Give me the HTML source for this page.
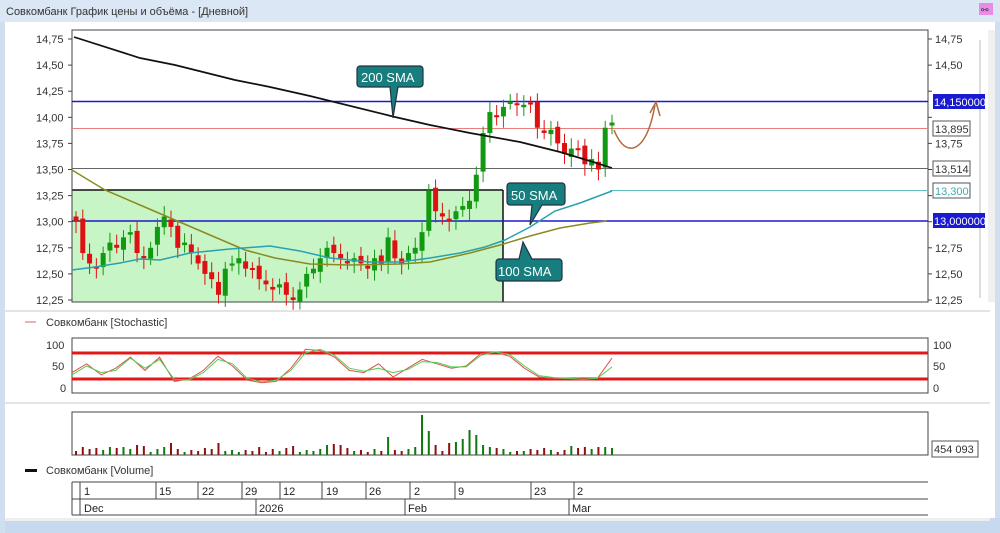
<!DOCTYPE html>
<html><head><meta charset="utf-8"><style>
html,body{margin:0;padding:0;width:1000px;height:533px;overflow:hidden;background:#cfdff0;font-family:"Liberation Sans","DejaVu Sans",sans-serif}
svg{position:absolute;left:0;top:0}
</style></head><body>
<svg id="s" width="1000" height="533" viewBox="0 0 1000 533" font-family="Liberation Sans, DejaVu Sans, sans-serif">
<rect x="0" y="0" width="1000" height="22" fill="#dbe7f4"/>
<text x="6" y="15" font-size="11" fill="#333">Совкомбанк График цены и объёма - [Дневной]</text>
<rect x="979" y="3" width="14" height="12" fill="#e98ce6"/>
<text x="981" y="13" font-size="9" fill="#333">⚯</text>
<rect x="5" y="22" width="990" height="498" fill="#fff"/>
<rect x="5" y="310" width="985" height="2" fill="#e4e4e4"/>
<rect x="5" y="402" width="985" height="2" fill="#e4e4e4"/>
<rect x="5" y="518" width="995" height="15" fill="#c7d9ee"/>
<rect x="5" y="518" width="985" height="3" fill="#eeeeee"/>
<rect x="988" y="30" width="7" height="272" fill="#f0f0f0"/>
<rect x="979" y="40" width="2" height="258" fill="#ddd"/>
<!-- main chart -->
<rect x="72" y="190" width="431" height="112" fill="#c8f5c5"/>
<line x1="72" y1="190" x2="503" y2="190" stroke="#111" stroke-width="1.5"/>
<line x1="503" y1="190" x2="503" y2="302" stroke="#111" stroke-width="1.5"/>
<rect x="72" y="30" width="856" height="272" fill="none" stroke="#444" stroke-width="1"/>
<line x1="72" y1="101.5" x2="928" y2="101.5" stroke="#1a1ad0" stroke-width="1.5"/>
<line x1="72" y1="221" x2="928" y2="221" stroke="#1a1ad0" stroke-width="1.5"/>
<line x1="72" y1="128.5" x2="928" y2="128.5" stroke="#e88080" stroke-width="1"/>
<line x1="72" y1="168.5" x2="928" y2="168.5" stroke="#666" stroke-width="1"/>
<line x1="610" y1="190.5" x2="928" y2="190.5" stroke="#60c0c0" stroke-width="1"/>
<g id="candles"></g>
<path d="M74,37 L140,58 L175,65 L235,80 L270,87 L310,96 L395,117 L430,125 L470,133 L520,142 L560,152 L590,161 L612,168" fill="none" stroke="#111" stroke-width="1.7"/>
<path d="M72,170 L105,190 L140,205 L175,220 L210,235 L245,250 L275,258 L310,264 L350,265 L400,264 L430,262 L470,253 L500,245 L530,236 L560,228 L590,223 L607,221" fill="none" stroke="#8a8a20" stroke-width="1.5"/>
<path d="M72,270 L95,267 L120,263 L140,259 L160,260 L190,253 L230,249 L270,246 L300,251 L330,258 L370,262 L400,262 L430,258 L460,253 L485,247 L505,240 L530,227 L555,211 L580,203 L612,191" fill="none" stroke="#2aa0b0" stroke-width="1.5"/>
<path d="M614,130 Q622,150 633,148 Q648,144 655,105 M650,113 L656,102 L660,116" fill="none" stroke="#b06a40" stroke-width="1.5"/>
<!-- labels -->
<g fill="#177d7d" stroke="#234" stroke-width="1.2">
<path d="M360,66 h60 a3,3 0 0 1 3,3 v15 a3,3 0 0 1 -3,3 h-22 l-5,31 l-3,-31 h-30 a3,3 0 0 1 -3,-3 v-15 a3,3 0 0 1 3,-3z"/>
<path d="M510,183 h52 a3,3 0 0 1 3,3 v16 a3,3 0 0 1 -3,3 h-20 l-12,20 l2,-20 h-22 a3,3 0 0 1 -3,-3 v-16 a3,3 0 0 1 3,-3z"/>
<path d="M499,259 h20 l4,-17 l9,17 h27 a3,3 0 0 1 3,3 v16 a3,3 0 0 1 -3,3 h-60 a3,3 0 0 1 -3,-3 v-16 a3,3 0 0 1 3,-3z"/>
</g>
<g fill="#fff" font-size="13"><text x="361" y="82">200 SMA</text><text x="511" y="200">50 SMA</text><text x="498" y="276">100 SMA</text></g>
<!-- axes -->
<g id="ax" font-size="11" fill="#333"></g>
<rect x="933" y="94" width="52" height="15" fill="#1a1ad0"/><text x="934" y="106" font-size="11" fill="#fff">14,150000</text>
<rect x="933" y="121" width="37" height="15" fill="#fff" stroke="#555"/><text x="935" y="133" font-size="11" fill="#333">13,895</text>
<rect x="933" y="161" width="37" height="15" fill="#fff" stroke="#555"/><text x="935" y="173" font-size="11" fill="#333">13,514</text>
<rect x="933" y="183" width="37" height="15" fill="#fff" stroke="#555"/><text x="935" y="195" font-size="11" fill="#4aa">13,300</text>
<rect x="933" y="213" width="52" height="15" fill="#1a1ad0"/><text x="934" y="225" font-size="11" fill="#fff">13,000000</text>
<!-- stochastic -->
<line x1="25" y1="322" x2="36" y2="322" stroke="#e06060"/>
<text x="46" y="326" font-size="11" fill="#333">Совкомбанк [Stochastic]</text>
<rect x="72" y="338" width="856" height="55" fill="none" stroke="#444"/>
<rect x="72" y="351.5" width="856" height="3" fill="#e01818"/>
<rect x="72" y="377.5" width="856" height="3" fill="#e01818"/>
<polyline id="st1" fill="none" stroke="#e05050" stroke-width="1"/>
<polyline id="st2" fill="none" stroke="#50d050" stroke-width="1"/>
<g font-size="11" fill="#333"><text x="46" y="349">100</text><text x="52" y="370">50</text><text x="60" y="392">0</text>
<text x="933" y="349">100</text><text x="933" y="370">50</text><text x="933" y="392">0</text></g>
<!-- volume -->
<rect x="72" y="412" width="856" height="43" fill="none" stroke="#444"/>
<g id="vol"></g>
<rect x="932" y="441" width="46" height="16" fill="#fff" stroke="#555"/><text x="934" y="453" font-size="11" fill="#333">454 093</text>
<rect x="25" y="469" width="12" height="3" fill="#111"/>
<text x="46" y="474" font-size="11" fill="#333">Совкомбанк [Volume]</text>
<!-- date axis -->
<g stroke="#444" fill="none"><line x1="72" y1="482" x2="928" y2="482"/><line x1="72" y1="499" x2="928" y2="499"/><line x1="72" y1="515" x2="928" y2="515"/><line x1="72" y1="482" x2="72" y2="515"/><line x1="80" y1="482" x2="80" y2="515"/>
<line x1="156" y1="482" x2="156" y2="499"/><line x1="198" y1="482" x2="198" y2="499"/><line x1="242" y1="482" x2="242" y2="499"/><line x1="280" y1="482" x2="280" y2="499"/><line x1="322" y1="482" x2="322" y2="499"/><line x1="366" y1="482" x2="366" y2="499"/><line x1="410" y1="482" x2="410" y2="499"/><line x1="455" y1="482" x2="455" y2="499"/><line x1="531" y1="482" x2="531" y2="499"/><line x1="574" y1="482" x2="574" y2="499"/>
<line x1="256" y1="499" x2="256" y2="515"/><line x1="405" y1="499" x2="405" y2="515"/><line x1="569" y1="499" x2="569" y2="515"/></g>
<g font-size="11" fill="#222"><text x="84" y="495">1</text><text x="159" y="495">15</text><text x="202" y="495">22</text><text x="245" y="495">29</text><text x="283" y="495">12</text><text x="326" y="495">19</text><text x="369" y="495">26</text><text x="414" y="495">2</text><text x="458" y="495">9</text><text x="534" y="495">23</text><text x="577" y="495">2</text>
<text x="84" y="512">Dec</text><text x="259" y="512">2026</text><text x="408" y="512">Feb</text><text x="572" y="512">Mar</text></g>
</svg>
<script>
var ns="http://www.w3.org/2000/svg";
function el(p,t,a){var e=document.createElementNS(ns,t);for(var k in a)e.setAttribute(k,a[k]);p.appendChild(e);return e;}
function Y(p){return 39+(14.75-p)*104.4;}
var ax=document.getElementById('ax');
var labs=["14,75","14,50","14,25","14,00","13,75","13,50","13,25","13,00","12,75","12,50","12,25"];
for(var i=0;i<11;i++){var y=Y(14.75-i*0.25);
el(ax,'text',{x:36,y:y+4}).textContent=labs[i];el(ax,'line',{x1:68,y1:y,x2:72,y2:y,stroke:'#444'});
if(i!=2&&i!=3&&i!=6&&i!=7)el(ax,'text',{x:935,y:y+4}).textContent=labs[i];el(ax,'line',{x1:928,y1:y,x2:932,y2:y,stroke:'#444'});}
var c=[13.0,12.7,12.6,12.55,12.7,12.8,12.75,12.85,12.9,12.7,12.65,12.75,12.95,13.05,12.95,12.75,12.8,12.7,12.6,12.5,12.45,12.3,12.55,12.6,12.65,12.55,12.55,12.45,12.4,12.35,12.4,12.3,12.25,12.35,12.5,12.55,12.65,12.75,12.7,12.65,12.6,12.65,12.6,12.55,12.65,12.6,12.85,12.65,12.6,12.7,12.75,12.9,13.3,13.1,13.05,13.0,13.1,13.15,13.2,13.45,13.85,14.05,14.0,14.1,14.15,14.12,14.12,14.13,13.9,13.85,13.88,13.75,13.65,13.7,13.7,13.55,13.6,13.5,13.9,13.95];
var g=document.getElementById('candles'),vg=document.getElementById('vol');
var n=c.length,dx=(612-76)/(n-1);
var vols=[4,8,6,7,5,8,7,8,6,10,9,3,6,8,12,6,3,5,4,7,6,12,4,5,3,5,4,8,3,6,4,7,9,3,5,4,6,10,11,10,7,4,5,3,6,4,18,5,4,6,8,40,24,10,4,12,13,16,25,20,10,8,7,6,3,4,4,6,5,7,5,3,5,9,7,8,6,8,8,7];
var sv=[35,55,30,45,70,40,70,15,20,40,72,50,18,12,15,45,88,85,70,40,35,55,25,45,65,55,45,50,78,82,72,45,25,22,22,20,22,68];
var sv2=[30,50,35,40,68,45,65,20,18,35,65,55,22,14,18,40,80,88,74,45,38,45,35,42,60,58,48,48,74,82,76,50,28,24,22,20,22,48];
for(var i=0;i<n;i++){var x=76+i*dx,cl=c[i],op=i?c[i-1]+(Math.sin(i*1.7)*0.03):13.05;
var up=cl>=op,col=up?'#119911':'#dd1111';var hi=Math.max(op,cl)+0.05+0.05*Math.abs(Math.sin(i*2.3)),lo=Math.min(op,cl)-0.05-0.06*Math.abs(Math.cos(i*1.3));
el(g,'line',{x1:x,y1:Y(hi),x2:x,y2:Y(lo),stroke:col,'stroke-width':1});
var t=Y(Math.max(op,cl)),h=Math.max(2,Y(Math.min(op,cl))-t);
el(g,'rect',{x:x-2.5,y:t,width:5,height:h,fill:col});
var v=vols[i%vols.length];el(vg,'rect',{x:x-1,y:455-v,width:2,height:v,fill:up?'#117711':'#8b1010'});}
function pts(a){var s='';for(var i=0;i<a.length;i++){s+=(72+i*(612-72)/(a.length-1))+','+(388-a[i]*0.44)+' ';}return s;}
document.getElementById('st1').setAttribute('points',pts(sv));
document.getElementById('st2').setAttribute('points',pts(sv2));
</script>
</body></html>
